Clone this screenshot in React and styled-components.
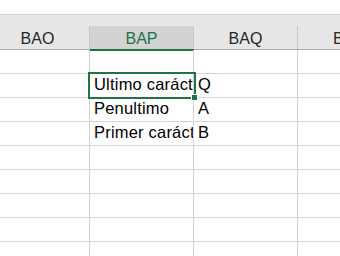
import React from 'react'
import styled, {createGlobalStyle} from 'styled-components'

const Global = createGlobalStyle`
body{
    margin: 0;
    background: #fff;
    font-family: "Liberation Sans", Arial, sans-serif;
    overflow: hidden;
}
`

const columns = ['BAO', 'BAP', 'BAQ', 'BAR']
const rows = [
    ['', '', '', ''],
    ['', 'Ultimo carácter', 'Q', ''],
    ['', 'Penultimo', 'A', ''],
    ['', 'Primer carácter', 'B', ''],
    ['', '', '', ''],
    ['', '', '', ''],
    ['', '', '', ''],
    ['', '', '', ''],
    ['', '', '', ''],
]

const App = () => {
    return (
        <Sheet>
            <Global/>
            <TopGap/>
            <Strip/>
            <HeaderRow>
                {columns.map((c, i) => (
                    <HeadCell key={c} active={i === 1}>{c}</HeadCell>
                ))}
            </HeaderRow>
            {rows.map((r, ri) => (
                <Row key={ri}>
                    {r.map((v, ci) => (
                        <Cell key={ci} selected={ri === 1 && ci === 1}>
                            <span>{v}</span>
                            {ri === 1 && ci === 1 && <Handle/>}
                        </Cell>
                    ))}
                </Row>
            ))}
        </Sheet>
    )
}

export default App

const Sheet = styled.div`
width: 340px;
height: 256px;
overflow: hidden;
`

const TopGap = styled.div`
height: 14px;
border-bottom: 1px solid #d5d5d5;
`

const Strip = styled.div`
height: 11px;
background: #e6e6e6;
`

const HeaderRow = styled.div`
display: flex;
margin-left: -14px;
height: 23px;
background: #e6e6e6;
border-bottom: 1px solid #ababab;
`

const HeadCell = styled.div`
flex: 0 0 104px;
box-sizing: border-box;
border-right: 1px solid #c6c6c6;
display: flex;
align-items: center;
justify-content: center;
padding-top: 2px;
font-size: 16px;
white-space: nowrap;
color: ${p => p.active ? '#217346' : '#262626'};
background: ${p => p.active ? '#d2d2d2' : 'transparent'};
position: relative;
${p => p.active && `
&:after{
    content: '';
    position: absolute;
    left: 0;
    right: -1px;
    bottom: -2px;
    height: 2px;
    background: #217346;
}
`}
`

const Row = styled.div`
display: flex;
margin-left: -14px;
height: 24px;
`

const Cell = styled.div`
flex: 0 0 104px;
min-width: 0;
box-sizing: border-box;
border-right: 1px solid #d4d4d4;
border-bottom: 1px solid #d4d4d4;
position: relative;
font-size: 16.5px;
letter-spacing: 0.2px;
color: #000;
padding: 0 0 3px 4px;
display: flex;
align-items: flex-end;
span{
    display: block;
    flex: 1;
    min-width: 0;
    white-space: nowrap;
    overflow: hidden;
}
${p => p.selected && `
&:before{
    content: '';
    position: absolute;
    left: -2px;
    top: -2px;
    right: -3px;
    bottom: -2px;
    border: 2px solid #217346;
    z-index: 1;
}
`}
`

const Handle = styled.div`
position: absolute;
right: -5px;
bottom: -4px;
width: 5px;
height: 5px;
background: #217346;
border: 1px solid #fff;
z-index: 2;
`
